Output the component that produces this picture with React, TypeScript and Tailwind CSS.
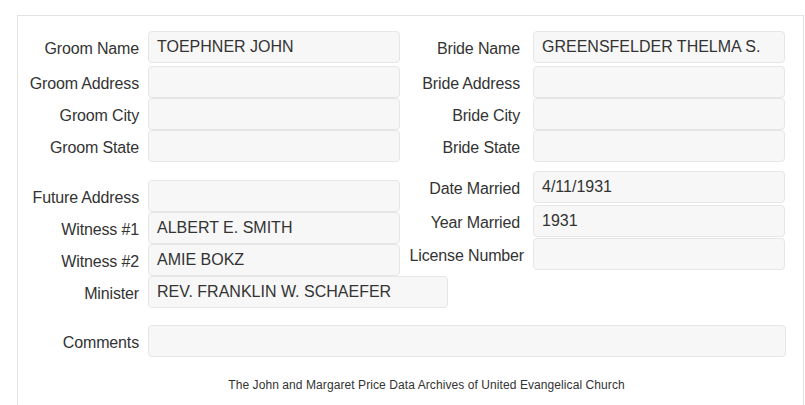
const groomFields = [
  { label: "Groom Name", value: "TOEPHNER JOHN", gap: "" },
  { label: "Groom Address", value: "", gap: "mt-[3px]" },
  { label: "Groom City", value: "", gap: "" },
  { label: "Groom State", value: "", gap: "" },
  { label: "Future Address", value: "", gap: "mt-[18px]" },
  { label: "Witness #1", value: "ALBERT E. SMITH", gap: "" },
  { label: "Witness #2", value: "AMIE BOKZ", gap: "" },
];

const brideFields = [
  { label: "Bride Name", value: "GREENSFELDER THELMA S.", gap: "", shift: "" },
  { label: "Bride Address", value: "", gap: "mt-[3px]", shift: "" },
  { label: "Bride City", value: "", gap: "", shift: "" },
  { label: "Bride State", value: "", gap: "", shift: "" },
  { label: "Date Married", value: "4/11/1931", gap: "mt-[9px]", shift: "" },
  { label: "Year Married", value: "1931", gap: "mt-[2px]", shift: "" },
  { label: "License Number", value: "", gap: "mt-px", shift: "-mr-[4px]" },
];

function Field({ value, width }: { value: string; width: string }) {
  return (
    <div
      className={`${width} h-[32px] shrink-0 flex items-center px-[8px] bg-[#f7f7f7] border border-[#e6e6e6] rounded-[4px] text-[16px] text-[#333] whitespace-nowrap`}
    >
      {value}
    </div>
  );
}

export default function App() {
  return (
    <div className="w-[805px] h-[405px] overflow-hidden bg-white font-['Liberation_Sans',Arial,sans-serif] text-[#333]">
      <div className="ml-[17px] mt-[15px] w-[787px] h-[420px] border border-[#e3e3e3] pt-[15px]">
        <div className="flex">
          {/* Groom column */}
          <div className="w-[382px] shrink-0 flex flex-col">
            {groomFields.map((f) => (
              <div key={f.label} className={`flex items-center ${f.gap}`}>
                <div className="w-[121px] shrink-0 pt-[3px] text-right text-[16px] tracking-[-0.15px] whitespace-nowrap">
                  {f.label}
                </div>
                <div className="ml-[9px] shrink-0">
                  <Field value={f.value} width="w-[252px]" />
                </div>
              </div>
            ))}
            <div className="flex items-center">
              <div className="w-[121px] shrink-0 pt-[3px] text-right text-[16px] tracking-[-0.15px]">
                Minister
              </div>
              <div className="ml-[9px] shrink-0">
                <Field value="REV. FRANKLIN W. SCHAEFER" width="w-[300px]" />
              </div>
            </div>
          </div>

          {/* Bride column */}
          <div className="flex flex-col">
            {brideFields.map((f) => (
              <div key={f.label} className={`flex items-center ${f.gap}`}>
                <div className="w-[120px] shrink-0 pt-[3px] text-right text-[16px] tracking-[-0.15px] whitespace-nowrap">
                  <span className={`inline-block ${f.shift}`}>{f.label}</span>
                </div>
                <div className="ml-[13px] shrink-0">
                  <Field value={f.value} width="w-[252px]" />
                </div>
              </div>
            ))}
          </div>
        </div>

        {/* Comments */}
        <div className="flex items-center mt-[17px]">
          <div className="w-[121px] shrink-0 pt-[3px] text-right text-[16px] tracking-[-0.15px]">
            Comments
          </div>
          <div className="ml-[9px] shrink-0">
            <Field value="" width="w-[638px]" />
          </div>
        </div>

        <div className="mt-[21px] pl-[32px] text-center text-[12px] tracking-[0.08px] leading-[14px]">
          The John and Margaret Price Data Archives of United Evangelical Church
        </div>
      </div>
    </div>
  );
}
